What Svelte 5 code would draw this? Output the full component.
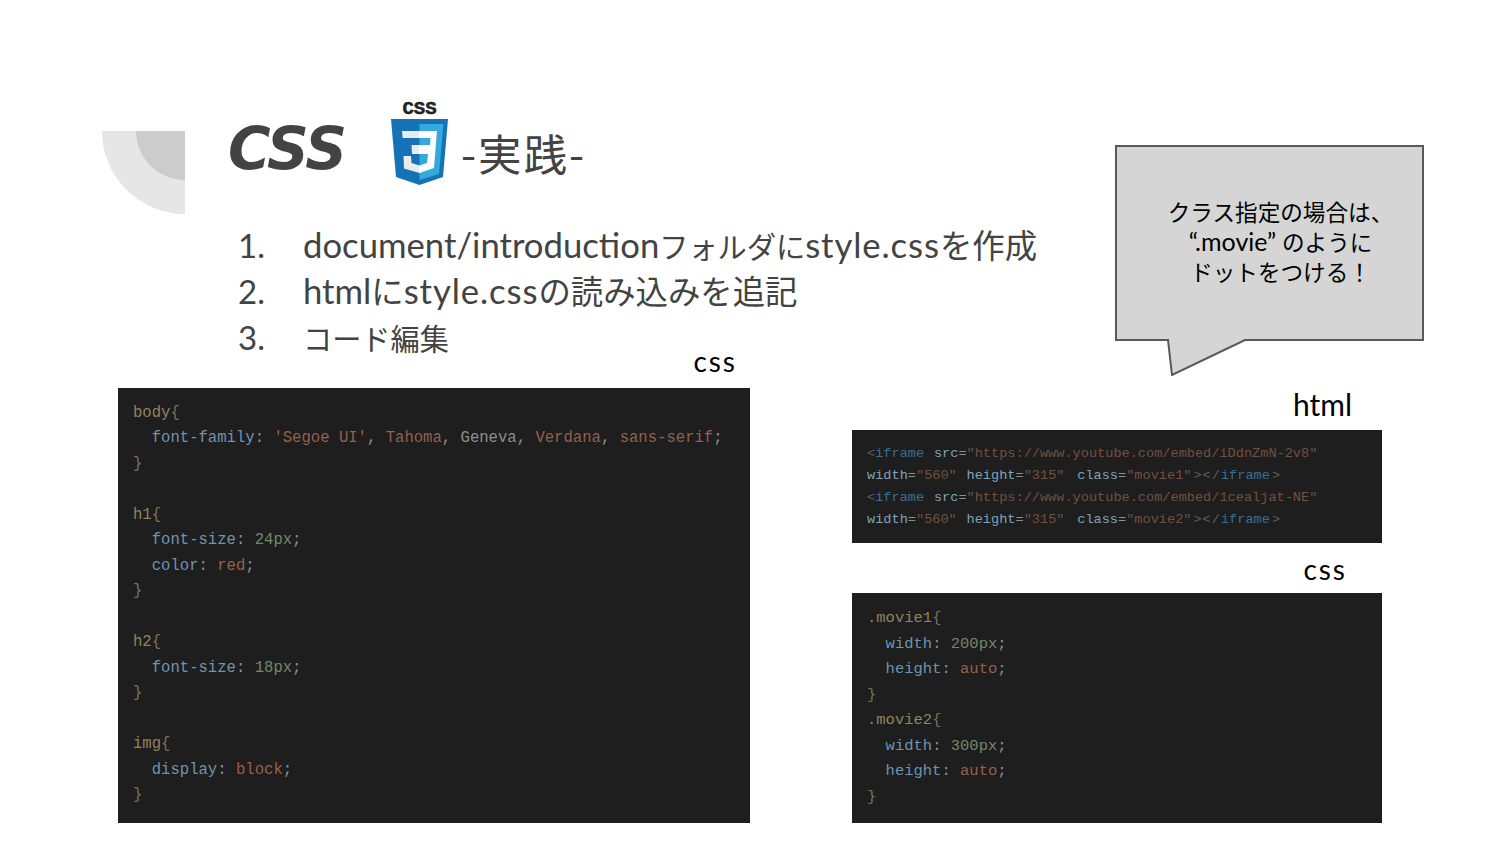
<script>
  const bodyCss = [
    [["sel", "body"], ["brc", "{"]],
    [["pun", "  "], ["key", "font-family"], ["pun", ": "], ["str", "'Segoe UI'"], ["pun", ", "], ["str", "Tahoma"], ["pun", ", Geneva, "], ["str", "Verdana"], ["pun", ", "], ["str", "sans-serif"], ["pun", ";"]],
    [["brc", "}"]],
    [],
    [["sel", "h1"], ["brc", "{"]],
    [["pun", "  "], ["key", "font-size"], ["pun", ": "], ["num", "24px"], ["pun", ";"]],
    [["pun", "  "], ["key", "color"], ["pun", ": "], ["str", "red"], ["pun", ";"]],
    [["brc", "}"]],
    [],
    [["sel", "h2"], ["brc", "{"]],
    [["pun", "  "], ["key", "font-size"], ["pun", ": "], ["num", "18px"], ["pun", ";"]],
    [["brc", "}"]],
    [],
    [["sel", "img"], ["brc", "{"]],
    [["pun", "  "], ["key", "display"], ["pun", ": "], ["str", "block"], ["pun", ";"]],
    [["brc", "}"]]
  ];

  const iframeLines = (id, cls) => [
    [["ang", "<"], ["tag", "iframe"], ["pun", " "], ["key", "src"], ["pun", "="], ["str", `"https://www.youtube.com/embed/${id}"`]],
    [["key", "width"], ["pun", "="], ["str", '"560"'], ["pun", " "], ["key", "height"], ["pun", "="], ["str", '"315"'], ["pun", " "], ["key cls", "class"], ["pun", "="], ["str", `"${cls}"`], ["ang end", "></"], ["tag", "iframe"], ["ang end", ">"]]
  ];
  const html = [...iframeLines("iDdnZmN-2v8", "movie1"), ...iframeLines("1cealjat-NE", "movie2")];

  const movieRule = (name, w) => [
    [["sel", name], ["brc", "{"]],
    [["pun", "  "], ["key", "width"], ["pun", ": "], ["num", w], ["pun", ";"]],
    [["pun", "  "], ["key", "height"], ["pun", ": "], ["str", "auto"], ["pun", ";"]],
    [["brc", "}"]]
  ];
  const movieCss = [...movieRule(".movie1", "200px"), ...movieRule(".movie2", "300px")];

  // latin runs are set larger than the japanese ones, as on the slide
  const steps = [
    [["en", "document/introduction"], ["ja", "フォルダに"], ["en st", "style.css"], ["ja2", "を作成"]],
    [["en", "html"], ["ja2", "に"], ["en st", "style.css"], ["ja2", "の読み込みを追記"]],
    [["ja", "コード編集"]]
  ];
</script>

{#snippet code(lines, cls)}
  <pre class="code {cls}">{#each lines as line}<div class="ln">{#each line as t}<span class={t[0]}>{t[1]}</span>{/each}{#if line.length === 0}&nbsp;{/if}</div>{/each}</pre>
{/snippet}

<div class="slide">
  <div class="corner"><div class="corner-in"></div></div>

  <section class="left">
    <header>
      <h1>CSS</h1>
      <svg class="logo" viewBox="0 0 64 88" aria-label="CSS3">
        <defs>
          <linearGradient id="three" gradientUnits="userSpaceOnUse" x1="0" y1="0" x2="64" y2="0">
            <stop offset="0.49" stop-color="#ebebeb" />
            <stop offset="0.49" stop-color="#fff" />
          </linearGradient>
        </defs>
        <text x="31.5" y="17" text-anchor="middle" class="logo-t">CSS</text>
        <path d="M3 22H60L55 80L31.5 88L8 80z" fill="#1572b6" />
        <path d="M31.5 27H55.5L51 77L31.5 83z" fill="#33a9dc" />
        <path d="M14 34H49L46 71L31.5 76L16 71.5L15.5 59H23L23.5 66L31.5 68.5L39 66L40 57H24L23.5 48H42L42.5 41H14.6z" fill="url(#three)" />
      </svg>
      <span class="sub">-実践-</span>
    </header>

    <ol>
      {#each steps as s, i}
        <li>
          <span class="no">{i + 1}.</span>
          <span>{#each s as run}<span class={run[0]}>{run[1]}</span>{/each}</span>
        </li>
      {/each}
    </ol>

    <div class="label l-css">css</div>
    {@render code(bodyCss, "big")}
  </section>

  <section class="right">
    <div class="callout">
      <svg class="bubble" viewBox="0 0 309 231" aria-hidden="true">
        <path d="M1 1H308V195H130L57 230L53 195H1z" fill="#d5d5d5" stroke="#595959" stroke-width="2" />
      </svg>
      <p>クラス指定の場合は、<br /><span class="mv">“.movie”</span> のように<br />ドットをつける！</p>
    </div>

    <div class="label l-html">html</div>
    {@render code(html, "small")}

    <div class="label l-css2">css</div>
    {@render code(movieCss, "mid")}
  </section>
</div>

<style>
  :global(body) {
    margin: 0;
    background: #fff;
  }

  .slide {
    position: relative;
    width: 1500px;
    height: 844px;
    box-sizing: border-box;
    padding: 97px 118px 0;
    display: grid;
    grid-template-columns: 632px 530px;
    column-gap: 102px;
    overflow: hidden;
    font-family: Lato, "Noto Sans CJK JP", sans-serif;
    color: #000;
  }

  .corner {
    position: absolute;
    left: 102px;
    top: 131px;
    width: 83px;
    height: 83px;
    background: #e6e6e6;
    border-bottom-left-radius: 100%;
    display: flex;
    justify-content: flex-end;
  }

  .corner-in {
    width: 49px;
    height: 49px;
    background: #cccccc;
    border-bottom-left-radius: 100%;
  }

  .left,
  .right {
    display: flex;
    flex-direction: column;
    position: relative;
  }

  header {
    height: 125px;
    padding-left: 110px;
    display: flex;
    align-items: flex-start;
    color: #434343;
  }

  h1 {
    margin: 21px 0 0;
    width: 161px;
    font: italic 700 58px/62px "DejaVu Sans", sans-serif;
    letter-spacing: -1.5px;
  }

  .logo {
    flex: none;
    width: 64px;
    height: 88px;
    margin-left: -1px;
    margin-right: 9px;
  }

  .logo-t {
    font: 700 19px "Liberation Mono", monospace;
    fill: #222;
    stroke: #222;
    stroke-width: 0.5px;
  }

  .sub {
    margin-top: 28px;
    font: 400 43.5px/56px "Noto Sans CJK JP", sans-serif;
    letter-spacing: 2px;
  }

  ol {
    list-style: none;
    margin: 0;
    padding: 0 0 0 110px;
    color: #434343;
  }

  li {
    display: flex;
    gap: 38px;
    height: 46px;
    line-height: 46px;
    white-space: nowrap;
    font-size: 33px;
  }

  .no {
    flex: none;
    width: 37px;
    text-align: right;
  }

  .en { font-size: 34.7px; line-height: 1; }
  .st { letter-spacing: 0.9px; }
  .ja { font-size: 29.2px; line-height: 1; }
  .ja2 { font-size: 32.4px; line-height: 1; }

  .label {
    text-align: right;
    font-size: 28px;
    line-height: 28px;
    letter-spacing: 2px;
  }

  .l-css {
    margin-top: -13px;
    padding-right: 13px;
    height: 41px;
  }

  .l-html {
    margin-top: 14px;
    height: 41px;
    padding-right: 30px;
    font-size: 30px;
    line-height: 30px;
    letter-spacing: 0;
  }

  .l-css2 {
    margin-top: 12px;
    height: 38px;
    padding-right: 35px;
  }

  .code {
    margin: 0;
    background: #1e1e1e;
    font-family: "Liberation Mono", monospace;
    white-space: pre;
  }

  .ln {
    height: 1lh;
  }

  .big {
    height: 435px;
    box-sizing: border-box;
    padding: 13px 15px 0;
    font-size: 15.6px;
    line-height: 25.47px;
  }

  .mid {
    height: 230px;
    box-sizing: border-box;
    padding: 13px 15px 0;
    font-size: 15.5px;
    line-height: 25.57px;
  }

  .small {
    height: 113px;
    box-sizing: border-box;
    padding: 13px 15px 0;
    font-size: 13.6px;
    line-height: 22px;
    word-spacing: 1.6px;
  }

  .sel { color: #94825c; }
  .key { color: #6d95ad; }
  .str { color: #96604b; }
  .num { color: #758768; }
  .pun { color: #8f8f8f; }
  .brc { color: #77735f; }
  .tag { color: #396f96; }
  .ang { color: #5c5c5c; }
  .cls { margin-left: 3px; }
  .end { margin-left: 2px; letter-spacing: 1px; }

  .small .str { color: #72503f; }
  .small .key { color: #7ea3b8; }

  .callout {
    position: relative;
    margin: 48px -42px 0 263px;
    height: 230px;
  }

  .bubble {
    position: absolute;
    inset: 0;
    width: 309px;
    height: 231px;
  }

  .callout p {
    position: relative;
    margin: 0;
    padding: 53px 0 0 22px;
    text-align: center;
    font-size: 22.6px;
    line-height: 30px;
  }

  .mv {
    font-size: 25px;
    line-height: 1;
  }
</style>
